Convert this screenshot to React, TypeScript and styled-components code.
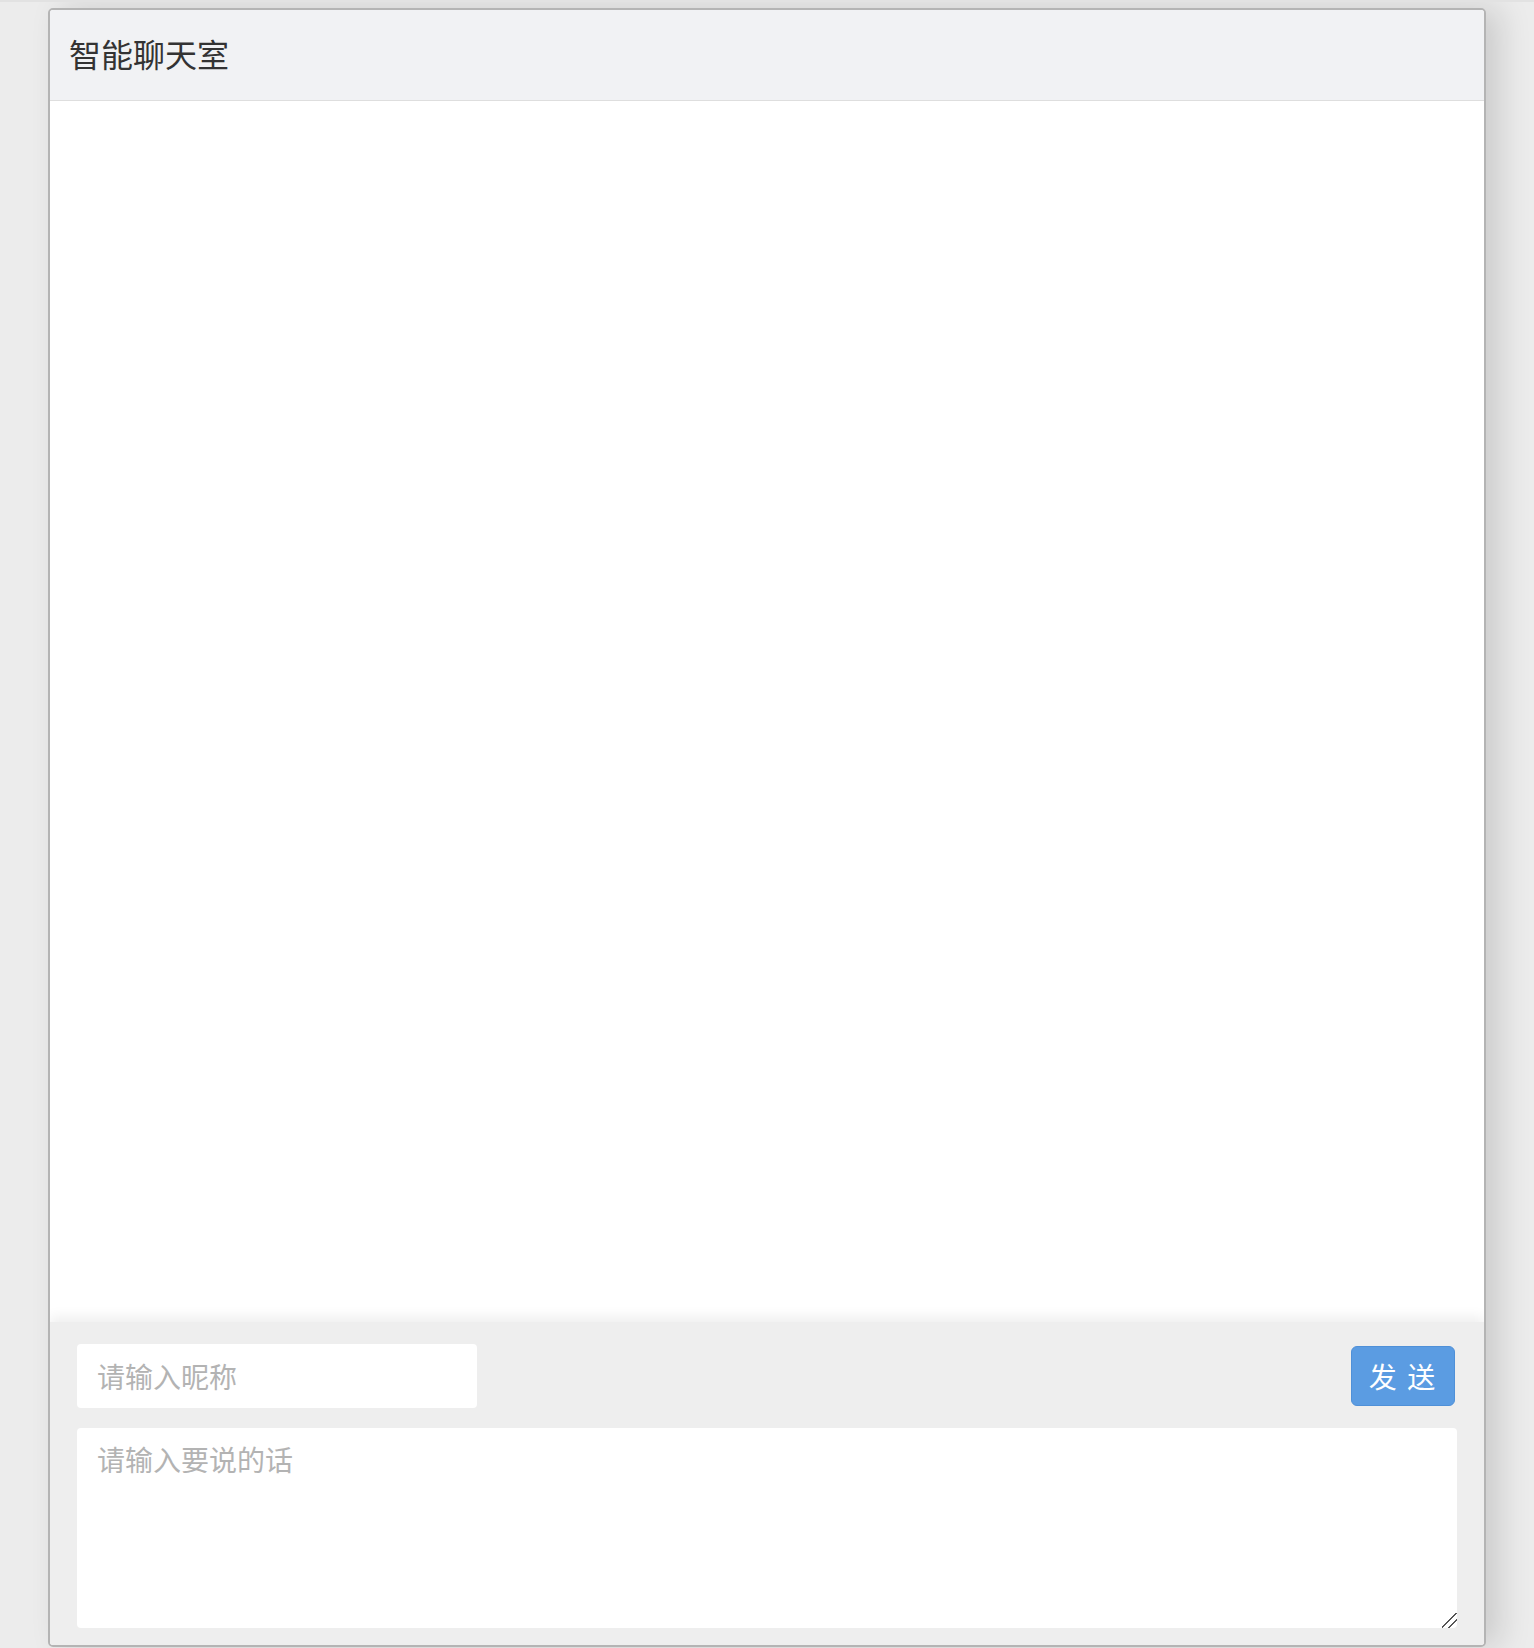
import React from "react";
import styled, { createGlobalStyle } from "styled-components";

const Global = createGlobalStyle`
  html, body {
    margin: 0;
    padding: 0;
    background: #ececec;
    font-family: "Noto Sans CJK SC", "Noto Sans", sans-serif;
  }
  * { box-sizing: border-box; }
`;

const Page = styled.div`
  min-height: 1648px;
  border-top: 2px solid #e2e2e2;
  padding-top: 6px;
  overflow: hidden;
`;

const Panel = styled.div`
  width: 1438px;
  height: 1639px;
  margin: 0 auto;
  display: flex;
  flex-direction: column;
  background: #ffffff;
  border: 2px solid #b4b4b4;
  border-radius: 5px;
  overflow: hidden;
  box-shadow: 14px 0 32px rgba(0, 0, 0, 0.14);
`;

const Header = styled.div`
  height: 91px;
  flex: none;
  display: flex;
  align-items: center;
  padding-left: 19px;
  padding-bottom: 4px;
  background: #f1f2f4;
  border-bottom: 1px solid #dedede;
`;

const Title = styled.h1`
  margin: 0;
  font-size: 32px;
  font-weight: 400;
  color: #333333;
  line-height: 1;
`;

const Messages = styled.div`
  flex: 1;
  background: #ffffff;
`;

const Footer = styled.div`
  flex: none;
  position: relative;
  background: #eeeeee;
  padding: 22px 27px 17px 27px;
  display: flex;
  flex-direction: column;
  gap: 20px;
  box-shadow: 0 -5px 12px rgba(0, 0, 0, 0.07);
`;

const Row = styled.div`
  display: flex;
  align-items: center;
  justify-content: space-between;
  padding-right: 2px;
`;

const NameInput = styled.input`
  width: 400px;
  height: 64px;
  border: none;
  border-radius: 4px;
  background: #ffffff;
  padding: 0 20px;
  font-family: inherit;
  font-size: 28px;
  color: #333;
  outline: none;
  &::placeholder { color: #b3b3b3; }
`;

const SendButton = styled.button`
  width: 104px;
  height: 60px;
  border: 1px solid #4f90d8;
  border-radius: 6px;
  background: #5b9ce2;
  color: #ffffff;
  font-family: inherit;
  font-size: 28px;
  letter-spacing: 2px;
  padding: 0;
  cursor: pointer;
`;

const MessageInput = styled.textarea`
  display: block;
  width: 1380px;
  height: 200px;
  border: none;
  border-radius: 4px;
  background: #ffffff;
  padding: 12px 20px;
  font-family: inherit;
  font-size: 28px;
  line-height: 1.4;
  color: #333;
  outline: none;
  resize: both;
  &::placeholder { color: #b3b3b3; }
  &::-webkit-resizer {
    background: linear-gradient(
      135deg,
      transparent 0%,
      transparent 44%,
      #555 44%,
      #555 52%,
      transparent 52%,
      transparent 68%,
      #555 68%,
      #555 76%,
      transparent 76%
    );
  }
`;

export default function App() {
  return (
    <>
      <Global />
      <Page>
        <Panel>
          <Header>
            <Title>智能聊天室</Title>
          </Header>
          <Messages />
          <Footer>
            <Row>
              <NameInput placeholder="请输入昵称" />
              <SendButton>发 送</SendButton>
            </Row>
            <MessageInput placeholder="请输入要说的话" />
          </Footer>
        </Panel>
      </Page>
    </>
  );
}
